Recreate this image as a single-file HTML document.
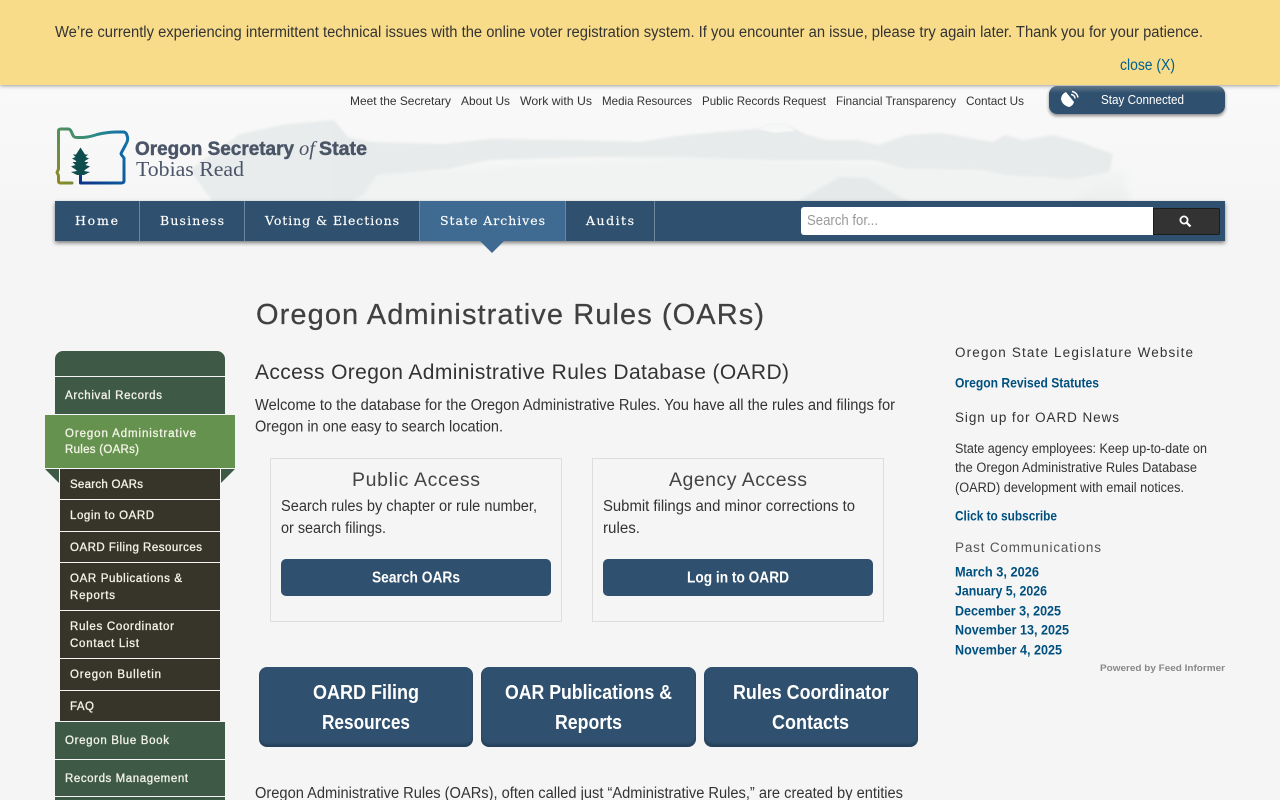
<!DOCTYPE html>
<html lang="en">
<head>
<meta charset="utf-8">
<title>Oregon Administrative Rules (OARs)</title>
<style>
html,body{margin:0;padding:0;width:1280px;height:800px;overflow:hidden;background:#f5f5f5}
body{position:relative;font-family:"Liberation Sans",sans-serif}
.b{position:absolute;box-sizing:border-box}
svg.layer{position:absolute;left:0;top:0}
text{font-family:"Liberation Sans",sans-serif;white-space:pre}
.ban{font-size:15.5px;fill:#333}
.top{font-size:12px;fill:#333}
.nav{font-family:"DejaVu Serif","Liberation Serif",serif;font-size:12.5px;fill:#fff;stroke:#fff;stroke-width:.15px}
.h1{font-size:29px;fill:#404040;stroke:#404040;stroke-width:.25px}
.h2{font-size:21px;fill:#333}
.p{font-size:15.5px;fill:#333}
.ct{font-size:19.5px;fill:#444}
.btn{font-size:16px;font-weight:bold;fill:#fff}
.big{font-size:20.5px;font-weight:bold;fill:#fff}
.side{font-size:11.5px;fill:#f3f3e6;stroke:#f3f3e6;stroke-width:.3px}
.rh{font-size:13.5px;fill:#333}
.rl{font-size:14px;font-weight:bold;fill:#00507f}
.rp{font-size:13.5px;fill:#333}
.lg{font-size:19px;font-weight:bold;fill:#4a5568;stroke:#4a5568;stroke-width:.45px}
</style>
</head>
<body>
<!-- header background -->
<svg class="layer" width="1280" height="800" viewBox="0 0 1280 800" aria-hidden="true">
<defs>
<filter id="bl" x="-5%" y="-20%" width="110%" height="140%"><feGaussianBlur stdDeviation="1.2"/></filter>
<filter id="bl2" x="-5%" y="-20%" width="110%" height="140%"><feGaussianBlur stdDeviation="4"/></filter>
<filter id="bl0" x="-5%" y="-20%" width="110%" height="140%"><feGaussianBlur stdDeviation=".6"/></filter>
<clipPath id="hc"><rect x="0" y="86" width="1280" height="115"/></clipPath>
<linearGradient id="hg" x1="0" y1="0" x2="0" y2="1"><stop offset="0" stop-color="#f9f9f9"/><stop offset="1" stop-color="#f6f6f6"/></linearGradient>
</defs>
<rect x="0" y="86" width="1280" height="115" fill="url(#hg)"/>
<g clip-path="url(#hc)">
<path filter="url(#bl2)" fill="#f1f3f3" d="M360 172L700 155L1000 170L1130 172L1120 205L340 205Z"/>
<path filter="url(#bl)" fill="#e9ecec" d="M190 170L240 134L287 124L333 120L347 137L352 205L215 205Z"/>
<path filter="url(#bl)" fill="#e8ebeb" d="M333 120L347 137L370 142L443 144L490 139L573 140L640 142L677 136L717 132L757 129L773 124L787 125L807 135L827 140L857 140L878 145L907 135L940 133L993 142L1005 135L1023 140L1053 135L1080 142L1113 154L1110 172L1073 179L1007 175L980 170L907 169L873 160L773 160L673 157L590 157L490 160L447 169L377 175L363 195L345 205L330 205Z"/>
<path filter="url(#bl0)" fill="#f6f7f7" d="M757 129L773 124L787 125L795 131L775 133Z"/>
<path filter="url(#bl)" fill="#e6e9e9" d="M793 204L840 177L867 178L913 204Z"/>
<path filter="url(#bl2)" fill="#eef0f0" d="M1065 205L1100 185L1130 190L1130 205Z"/>
</g>
</svg>

<!-- banner -->
<div class="b" style="left:0;top:0;width:1280px;height:85px;background:#f8dc8a;box-shadow:0 1px 4px rgba(0,0,0,.35)"></div>

<!-- stay connected -->
<div class="b" style="left:1049px;top:86px;width:176px;height:28px;border-radius:8px;background:linear-gradient(#64798a 0,#2f506e 7px,#2f506e 100%);box-shadow:0 2px 3px rgba(0,0,0,.45)"></div>

<!-- nav -->
<div class="b" style="left:55px;top:201px;width:1170px;height:40px;background:#2f506e;box-shadow:0 2px 4px rgba(0,0,0,.5)"></div>
<div class="b" style="left:420px;top:201px;width:145px;height:40px;background:#3f6a91"></div>
<div class="b" style="left:139px;top:201px;width:1px;height:40px;background:#6d87a0"></div>
<div class="b" style="left:244px;top:201px;width:1px;height:40px;background:#6d87a0"></div>
<div class="b" style="left:419px;top:201px;width:1px;height:40px;background:#6d87a0"></div>
<div class="b" style="left:565px;top:201px;width:1px;height:40px;background:#6d87a0"></div>
<div class="b" style="left:654px;top:201px;width:1px;height:40px;background:#6d87a0"></div>
<div class="b" style="left:480px;top:241px;width:0;height:0;border-left:12px solid transparent;border-right:12px solid transparent;border-top:12px solid #3f6a91"></div>
<div class="b" style="left:801px;top:207px;width:352px;height:28px;background:#fff;border-radius:3px 0 0 3px"></div>
<div class="b" style="left:1153px;top:208px;width:67px;height:27px;background:#333;border:1px solid #1c1c1c;border-radius:0 2px 2px 0"></div>

<!-- sidebar -->
<div class="b" style="left:55px;top:351px;width:170px;height:25px;background:#3e5a47;border-radius:8px 8px 0 0"></div>
<div class="b" style="left:55px;top:377px;width:170px;height:37px;background:#3e5a47"></div>
<div class="b" style="left:45px;top:415px;width:190px;height:53px;background:#66924f"></div>
<div class="b" style="left:45px;top:469px;width:0;height:0;border-top:14px solid #3e5a47;border-left:14px solid transparent"></div>
<div class="b" style="left:221px;top:469px;width:0;height:0;border-top:14px solid #3e5a47;border-right:14px solid transparent"></div>
<div class="b" style="left:60px;top:469px;width:160px;height:30px;background:#37352a"></div>
<div class="b" style="left:60px;top:500px;width:160px;height:31px;background:#37352a"></div>
<div class="b" style="left:60px;top:532px;width:160px;height:30px;background:#37352a"></div>
<div class="b" style="left:60px;top:563px;width:160px;height:47px;background:#37352a"></div>
<div class="b" style="left:60px;top:611px;width:160px;height:47px;background:#37352a"></div>
<div class="b" style="left:60px;top:659px;width:160px;height:31px;background:#37352a"></div>
<div class="b" style="left:60px;top:691px;width:160px;height:30px;background:#37352a"></div>
<div class="b" style="left:55px;top:722px;width:170px;height:37px;background:#3e5a47"></div>
<div class="b" style="left:55px;top:760px;width:170px;height:36px;background:#3e5a47"></div>
<div class="b" style="left:55px;top:797px;width:170px;height:3px;background:#3e5a47"></div>

<!-- cards -->
<div class="b" style="left:270px;top:458px;width:292px;height:164px;border:1px solid #ddd"></div>
<div class="b" style="left:592px;top:458px;width:292px;height:164px;border:1px solid #ddd"></div>
<div class="b" style="left:281px;top:559px;width:270px;height:37px;background:#2f506e;border-radius:5px"></div>
<div class="b" style="left:603px;top:559px;width:270px;height:37px;background:#2f506e;border-radius:5px"></div>

<!-- big buttons -->
<div class="b" style="left:259px;top:667px;width:214px;height:80px;background:#2f506e;border-radius:8px;box-shadow:inset 0 -3px 2px rgba(0,0,0,.18)"></div>
<div class="b" style="left:481px;top:667px;width:215px;height:80px;background:#2f506e;border-radius:8px;box-shadow:inset 0 -3px 2px rgba(0,0,0,.18)"></div>
<div class="b" style="left:704px;top:667px;width:214px;height:80px;background:#2f506e;border-radius:8px;box-shadow:inset 0 -3px 2px rgba(0,0,0,.18)"></div>

<svg class="layer" width="1280" height="800" viewBox="0 0 1280 800">
<defs>
<linearGradient id="lg" gradientUnits="userSpaceOnUse" x1="57" y1="182" x2="127" y2="132">
<stop offset="0" stop-color="#8f8a22"/><stop offset=".4" stop-color="#4f8f5f"/><stop offset=".7" stop-color="#2a8a8a"/><stop offset="1" stop-color="#0f6ea8"/>
</linearGradient>
<linearGradient id="lg2" gradientUnits="userSpaceOnUse" x1="125" y1="150" x2="80" y2="182">
<stop offset="0" stop-color="#0f6ea8"/><stop offset="1" stop-color="#0b3488"/>
</linearGradient>
</defs>
<!-- logo -->
<path fill="none" stroke="url(#lg)" stroke-width="3" stroke-linejoin="round" stroke-linecap="round" d="M72 183H60.500Q58.500 183 58.500 181V175.500L57 172.500L58.500 169V131Q58.500 129 61 129H68Q70 129 71 131L73 135.500Q74 137.500 77 137.500H83Q90 137 97 134.500Q108 132 117 132H123Q125.500 132 126.500 134L127.500 137Q128 139 127 142L125 146"/>
<path fill="none" stroke="url(#lg2)" stroke-width="3" stroke-linejoin="round" stroke-linecap="round" d="M125 146L121.500 152.500Q120.500 154 122 155.500L124 158V181Q124 183 121 183H80.500V172"/>
<path fill="#0e4d4d" d="M80.500 147.500L85 154.500H88L85.500 157L89 158.500L85.500 160.500L84.500 162H88.500L85.500 165L90 166.500L85.500 169.500L84 171L90 172L84 175H77L71 172L77 171L75.500 169.500L71 166.500L75.500 165L72.500 162H76.500L75.500 160.500L72 158.500L75.500 157L73 154.500H76Z"/>
<text class="lg" x="135" y="155" textLength="159" lengthAdjust="spacingAndGlyphs">Oregon Secretary</text>
<text x="299" y="155" font-size="20" font-style="italic" fill="#4a5568" style="font-family:'Liberation Serif',serif" textLength="16" lengthAdjust="spacingAndGlyphs">of</text>
<text class="lg" x="319" y="155" textLength="48" lengthAdjust="spacingAndGlyphs">State</text>
<text x="136" y="176" font-size="21" fill="#4a5568" style="font-family:'Liberation Serif',serif" textLength="108" lengthAdjust="spacingAndGlyphs">Tobias Read</text>

<!-- banner text -->
<text class="ban" x="55" y="37" textLength="1148" lengthAdjust="spacingAndGlyphs">We’re currently experiencing intermittent technical issues with the online voter registration system. If you encounter an issue, please try again later. Thank you for your patience.</text>
<text x="1120" y="70" font-size="15.5" fill="#00608f" textLength="55" lengthAdjust="spacingAndGlyphs">close (X)</text>

<!-- utility links -->
<text class="top" x="350" y="105" textLength="101" lengthAdjust="spacingAndGlyphs">Meet the Secretary</text>
<text class="top" x="461" y="105" textLength="49" lengthAdjust="spacingAndGlyphs">About Us</text>
<text class="top" x="520" y="105" textLength="72" lengthAdjust="spacingAndGlyphs">Work with Us</text>
<text class="top" x="602" y="105" textLength="90" lengthAdjust="spacingAndGlyphs">Media Resources</text>
<text class="top" x="702" y="105" textLength="124" lengthAdjust="spacingAndGlyphs">Public Records Request</text>
<text class="top" x="836" y="105" textLength="120" lengthAdjust="spacingAndGlyphs">Financial Transparency</text>
<text class="top" x="966" y="105" textLength="58" lengthAdjust="spacingAndGlyphs">Contact Us</text>

<!-- stay connected -->
<path fill="#fff" d="M1066 92A8 8 0 0 0 1061 99Q1062 105 1069 107A7 7 0 0 0 1074 102Z"/>
<path fill="none" stroke="#fff" stroke-width="1.500" d="M1071 94.500A4 4 0 0 1 1075 98.500M1072 91.500A7 7 0 0 1 1078 97.500"/>
<text x="1101" y="104" font-size="12.500" fill="#fff" textLength="83" lengthAdjust="spacingAndGlyphs">Stay Connected</text>

<!-- nav text -->
<text class="nav" x="75" y="225" textLength="43" lengthAdjust="spacing">Home</text>
<text class="nav" x="160" y="225" textLength="64" lengthAdjust="spacing">Business</text>
<text class="nav" x="265" y="225" textLength="134" lengthAdjust="spacing">Voting &amp; Elections</text>
<text class="nav" x="440" y="225" textLength="105" lengthAdjust="spacing">State Archives</text>
<text class="nav" x="586" y="225" textLength="48" lengthAdjust="spacing">Audits</text>
<text x="807" y="225" font-size="14.500" fill="#999" textLength="71" lengthAdjust="spacingAndGlyphs">Search for...</text>
<circle cx="1184" cy="220" r="3.600" fill="none" stroke="#fff" stroke-width="1.800"/>
<path d="M1186.800 222.800L1190.500 226.500" stroke="#fff" stroke-width="2.200" fill="none"/>

<!-- headings -->
<text class="h1" x="256" y="324" textLength="508" lengthAdjust="spacing">Oregon Administrative Rules (OARs)</text>
<text class="h2" x="255" y="379" textLength="534" lengthAdjust="spacing">Access Oregon Administrative Rules Database (OARD)</text>
<text class="p" x="255" y="410" textLength="640" lengthAdjust="spacingAndGlyphs">Welcome to the database for the Oregon Administrative Rules. You have all the rules and filings for</text>
<text class="p" x="255" y="431.500" textLength="248" lengthAdjust="spacingAndGlyphs">Oregon in one easy to search location.</text>

<!-- cards -->
<text class="ct" x="352" y="486" textLength="128" lengthAdjust="spacing">Public Access</text>
<text class="p" x="281" y="511" textLength="256" lengthAdjust="spacingAndGlyphs">Search rules by chapter or rule number,</text>
<text class="p" x="281" y="533" textLength="105" lengthAdjust="spacingAndGlyphs">or search filings.</text>
<text class="btn" x="372" y="582.500" textLength="88" lengthAdjust="spacingAndGlyphs">Search OARs</text>
<text class="ct" x="669" y="486" textLength="138" lengthAdjust="spacing">Agency Access</text>
<text class="p" x="603" y="511" textLength="252" lengthAdjust="spacingAndGlyphs">Submit filings and minor corrections to</text>
<text class="p" x="603" y="533" textLength="37" lengthAdjust="spacingAndGlyphs">rules.</text>
<text class="btn" x="687" y="582.500" textLength="102" lengthAdjust="spacingAndGlyphs">Log in to OARD</text>

<!-- big buttons -->
<text class="big" x="313" y="699" textLength="106" lengthAdjust="spacingAndGlyphs">OARD Filing</text>
<text class="big" x="322" y="729" textLength="88" lengthAdjust="spacingAndGlyphs">Resources</text>
<text class="big" x="505" y="699" textLength="167" lengthAdjust="spacingAndGlyphs">OAR Publications &amp;</text>
<text class="big" x="555" y="729" textLength="67" lengthAdjust="spacingAndGlyphs">Reports</text>
<text class="big" x="733" y="699" textLength="156" lengthAdjust="spacingAndGlyphs">Rules Coordinator</text>
<text class="big" x="772" y="729" textLength="77" lengthAdjust="spacingAndGlyphs">Contacts</text>
<text class="p" x="255" y="798" textLength="648" lengthAdjust="spacingAndGlyphs">Oregon Administrative Rules (OARs), often called just “Administrative Rules,” are created by entities</text>

<!-- sidebar -->
<text class="side" x="65" y="399" textLength="97" lengthAdjust="spacing">Archival Records</text>
<text class="side" x="65" y="437" textLength="131" lengthAdjust="spacing">Oregon Administrative</text>
<text class="side" x="65" y="453" textLength="74" lengthAdjust="spacing">Rules (OARs)</text>
<text class="side" x="70" y="488" textLength="73" lengthAdjust="spacing">Search OARs</text>
<text class="side" x="70" y="519" textLength="84" lengthAdjust="spacing">Login to OARD</text>
<text class="side" x="70" y="551" textLength="132" lengthAdjust="spacing">OARD Filing Resources</text>
<text class="side" x="70" y="582" textLength="112" lengthAdjust="spacing">OAR Publications &amp;</text>
<text class="side" x="70" y="599" textLength="45" lengthAdjust="spacing">Reports</text>
<text class="side" x="70" y="630" textLength="104" lengthAdjust="spacing">Rules Coordinator</text>
<text class="side" x="70" y="647" textLength="69" lengthAdjust="spacing">Contact List</text>
<text class="side" x="70" y="678" textLength="91" lengthAdjust="spacing">Oregon Bulletin</text>
<text class="side" x="70" y="710" textLength="24" lengthAdjust="spacing">FAQ</text>
<text class="side" x="65" y="744" textLength="104" lengthAdjust="spacing">Oregon Blue Book</text>
<text class="side" x="65" y="782" textLength="123" lengthAdjust="spacing">Records Management</text>

<!-- right column -->
<text class="rh" x="955" y="357" textLength="238" lengthAdjust="spacing">Oregon State Legislature Website</text>
<text class="rl" x="955" y="387.500" textLength="144" lengthAdjust="spacingAndGlyphs">Oregon Revised Statutes</text>
<text class="rh" x="955" y="422" textLength="164" lengthAdjust="spacing">Sign up for OARD News</text>
<text class="rp" x="955" y="453" textLength="252" lengthAdjust="spacingAndGlyphs">State agency employees: Keep up-to-date on</text>
<text class="rp" x="955" y="472" textLength="242" lengthAdjust="spacingAndGlyphs">the Oregon Administrative Rules Database</text>
<text class="rp" x="955" y="492" textLength="229" lengthAdjust="spacingAndGlyphs">(OARD) development with email notices.</text>
<text class="rl" x="955" y="520.500" textLength="102" lengthAdjust="spacingAndGlyphs">Click to subscribe</text>
<text class="rh" x="955" y="552" style="fill:#555" textLength="146" lengthAdjust="spacing">Past Communications</text>
<text class="rl" x="955" y="576.500" textLength="84" lengthAdjust="spacingAndGlyphs">March 3, 2026</text>
<text class="rl" x="955" y="595.500" textLength="92" lengthAdjust="spacingAndGlyphs">January 5, 2026</text>
<text class="rl" x="955" y="615.500" textLength="106" lengthAdjust="spacingAndGlyphs">December 3, 2025</text>
<text class="rl" x="955" y="634.500" textLength="114" lengthAdjust="spacingAndGlyphs">November 13, 2025</text>
<text class="rl" x="955" y="654.500" textLength="107" lengthAdjust="spacingAndGlyphs">November 4, 2025</text>
<text x="1100" y="671" font-size="9.500" font-weight="bold" fill="#888" textLength="125" lengthAdjust="spacingAndGlyphs">Powered by Feed Informer</text>
</svg>
</body>
</html>
